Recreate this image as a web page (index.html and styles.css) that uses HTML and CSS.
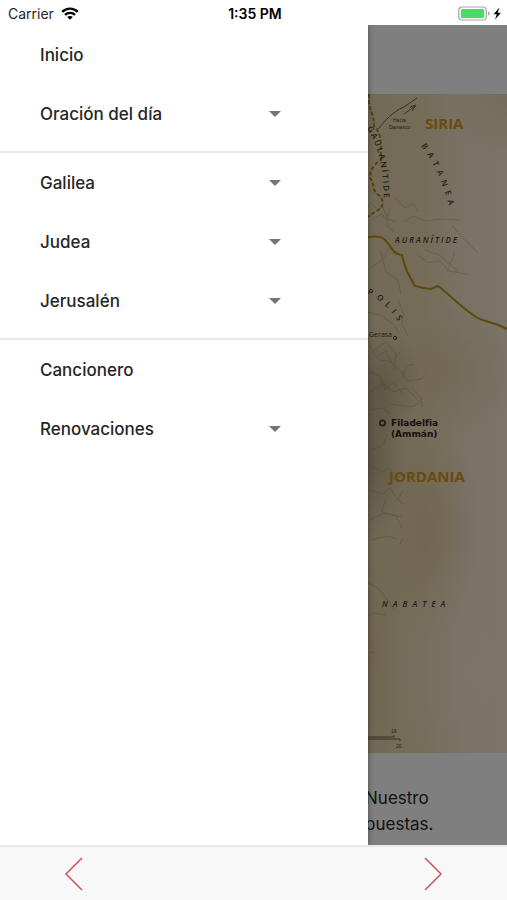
FILE: index.html
```
<!doctype html>
<html lang="es">
    <head>
        <meta charset="UTF-8" />
        <meta name="viewport" content="width=device-width, initial-scale=1.0" />
        <title>Inicio</title>
        <link rel="stylesheet" href="styles.css">
    </head>
    <body>
        <header class="status">
            <div class="carrier">
                Carrier
                <svg width="18" height="13" viewBox="0 0 18 13">
                    <g fill="none" stroke="#000" stroke-width="2.4">
                        <path d="M1.2 4.9C5.6 .5 12.4 .5 16.8 4.9" />
                        <path d="M4 7.9C6.8 5.2 11.2 5.2 14 7.9" />
                    </g>
                    <path d="M9 12.8L6.2 10C7.8 8.5 10.2 8.5 11.8 10z" />
                </svg>
            </div>
            <div class="time">1:35 PM</div>
            <div class="battery">
                <svg width="44" height="15" viewBox="0 0 44 15">
                    <rect x=".7" y="1" width="27.6" height="13" rx="3.5" fill="#fff" stroke="#a5a5a5" stroke-width="1.2" />
                    <rect x="2.8" y="3" width="23.4" height="9" rx="1.5" fill="#4cd964" />
                    <path d="M30 5.5c2 .6 2 3.400 0 4z" fill="#a5a5a5" />
                    <path d="M41.500 1.500L35.500 8.200h3.300L37 13.500l6-6.800h-3.300z" fill="#000" />
                </svg>
            </div>
        </header>

        <main>
            <div class="page">
                <div class="toolbar"></div>
                <svg class="map" viewBox="0 94 507 659">
                    <defs>
                        <linearGradient id="paper">
                            <stop offset="0" stop-color="#e6d5a9" />
                            <stop offset=".74" stop-color="#e6d6ae" />
                            <stop offset=".84" stop-color="#ebdab2" />
                            <stop offset=".92" stop-color="#f4e6cb" />
                            <stop offset="1" stop-color="#f6e9d0" />
                        </linearGradient>
                        <radialGradient id="stain">
                            <stop offset="0" stop-color="#cdb07a" stop-opacity=".3" />
                            <stop offset="1" stop-color="#cdb07a" stop-opacity="0" />
                        </radialGradient>
                        <radialGradient id="light">
                            <stop offset="0" stop-color="#f6ead2" stop-opacity=".8" />
                            <stop offset="1" stop-color="#f6ead2" stop-opacity="0" />
                        </radialGradient>
                        <radialGradient id="shade">
                            <stop offset="0" stop-color="#8f7d5c" stop-opacity=".45" />
                            <stop offset="1" stop-color="#8f7d5c" stop-opacity="0" />
                        </radialGradient>
                        <path id="gaulanitide" d="M367 128C379 148 384 168 384 210" />
                        <path id="batanea" d="M421 146Q440 170 450 210" />
                        <path id="decapolis" d="M367 294Q383 299 402 326" />
                    </defs>
                    <rect y="94" width="507" height="659" fill="url(#paper)" />
                    <ellipse cx="507" cy="94" rx="60" ry="70" fill="url(#stain)" />
                    <ellipse cx="455" cy="370" rx="65" ry="70" fill="url(#stain)" />
                    <ellipse cx="430" cy="530" rx="50" ry="110" fill="url(#stain)" />
                    <ellipse cx="372" cy="650" rx="30" ry="140" fill="url(#stain)" />
                    <ellipse cx="470" cy="670" rx="80" ry="120" fill="url(#light)" />
                    <ellipse cx="380" cy="385" rx="42" ry="60" fill="url(#shade)" />
                    <ellipse cx="372" cy="460" rx="34" ry="90" fill="url(#shade)" />

                    <!-- relieve -->
                    <g class="relief">
                        <path d="M370 202l8 8 5-3 4 12 10 3M372 220l10-6 8 12M395 198l10 10 8-4 5 8M404 222l9-6 12 5 18-2 16 1M390 208l-4 18 8 5" />
                        <path d="M418 255l10 8 12-2 9 10 18 3M425 250l14 5 10 8 9 8M455 252l-8 20M452 225l8 10 18 18" />
                        <path d="M371 268l12-9 7-12 5 8M380 250l6 22 12 8 3 14M368 312l14 4 12 9 5 8M398 300l6 14-2 10 6 12" />
                        <path d="M370 345l6 12 10-6 7 14 8 6 6 10 14-2 4-5M370 372l10 4 5 14 8-8 10 12M374 350l12-8 10 12-2 16M380 360l14 2 6-10" />
                        <path d="M370 392l14-8 10 8 12-4 14 14-8 5-22-3M402 378l4-12 8-2M370 410l12-2 8 6M412 388l9 10 1 9" />
                        <path d="M370 450l12-4 6-12M372 466l10 6 8-4 4 12 9-6M370 490l12 4 8-6 8 12 6 4M386 498l-4 14 14 4 6 12M398 500l5-10M370 520l14-7 18 4M371 540l16-4 10 3" />
                        <path d="M368 583l10 5 8 10 8 12M368 616l6-3 12 2M370 652l5 1M400 544l3-6" />
                    </g>

                    <path class="track" d="M378 129C386 120 392 112 404 107L417 98M404 114l11-8m-5 1l6-2-4 6" />
                    <path class="border" d="M369 94C368 112 374 112 374 126C384 136 380 150 381 160C374 164 370 170 370 178C376 184 370 190 380 196C388 208 376 210 368 217" />
                    <path class="road" d="M368 237C376 236 382 236 385 240C391 246 393 253 398 254L402 255C405 272 410 275 414 285C418 288 425 288 431 289L438 286C450 295 462 308 476 317C486 323 492 321 507 329" />

                    <g class="labels">
                        <text class="country" x="425" y="129">SIRIA</text>
                        <text class="country" x="389" y="482">JORDANIA</text>
                        <text class="tiny" x="393" y="122">Hacia</text>
                        <text class="tiny" x="389" y="129">Damasco</text>
                        <text class="region spaced"><textPath href="#gaulanitide">GAULANÍTIDE</textPath></text>
                        <text class="region wide"><textPath href="#batanea">BATANEA</textPath></text>
                        <text class="region spaced italic" x="395" y="243">AURANÍTIDE</text>
                        <text class="region wide"><textPath href="#decapolis">POLIS</textPath></text>
                        <text class="region wide italic" x="382" y="607">NABATEA</text>
                        <text class="town" x="369" y="337">Gerasa</text>
                        <text class="city" x="391" y="426">Filadelfia</text>
                        <text class="city" x="391" y="437">(Ammán)</text>
                        <text class="tiny" x="391" y="733">16</text>
                        <text class="tiny" x="396" y="748">20</text>
                    </g>
                    <circle class="dot" cx="395" cy="338" r="1.6" stroke-width="1" />
                    <circle class="dot" cx="382.500" cy="423" r="2.6" stroke-width="1.8" />
                    <path class="scale" d="M340 737h54v-2M340 739h60v2" />
                </svg>
                <p class="text">Nuestro<br />puestas.</p>
            </div>
            <div class="backdrop"></div>

            <nav class="menu">
                <div class="group">
                    <a href="#" class="item">Inicio</a>
                    <button type="button" class="item">Oración del día</button>
                </div>
                <div class="group">
                    <button type="button" class="item">Galilea</button>
                    <button type="button" class="item">Judea</button>
                    <button type="button" class="item">Jerusalén</button>
                </div>
                <div class="group">
                    <a href="#" class="item">Cancionero</a>
                    <button type="button" class="item">Renovaciones</button>
                </div>
            </nav>
        </main>

        <footer class="pager">
            <button type="button" aria-label="Anterior">
                <svg width="20" height="36" viewBox="0 0 20 36">
                    <path d="M18 2L2 18l16 16" />
                </svg>
            </button>
            <button type="button" aria-label="Siguiente">
                <svg width="20" height="36" viewBox="0 0 20 36">
                    <path d="M2 2l16 16L2 34" />
                </svg>
            </button>
        </footer>
    </body>
</html>
```
FILE: styles.css
```
* {
    box-sizing: border-box;
}
body {
    display: flex;
    flex-direction: column;
    min-height: 100vh;
    margin: 0;
    background-color: #fff;
    color: #262626;
    font-family: Inter, "Liberation Sans", sans-serif;
}
button {
    padding: 0;
    border: none;
    background: none;
    font-family: inherit;
    cursor: pointer;
}
svg {
    display: block;
}

/* status bar */
.status {
    display: grid;
    grid-template-columns: 1fr auto 1fr;
    align-items: center;
    height: 25px;
    padding: 2px 5px 0 8px;
    font-size: 14px;
}
.carrier {
    display: flex;
    align-items: center;
    gap: 7px;
}
.time {
    color: #000;
    font-weight: 600;
}
.battery {
    justify-self: end;
}

/* page */
main {
    position: relative;
    flex: 1;
    overflow: hidden;
}
.toolbar {
    height: 69px;
}
.map {
    width: 100%;
}
.text {
    margin: 0 0 0 72%;
    padding: 32px 0 8px;
    font-size: 17px;
    line-height: 26px;
}
.backdrop {
    position: absolute;
    inset: 0;
    background-color: rgba(0, 0, 0, 0.5);
}

/* map */
.relief {
    fill: none;
    stroke: #806a45;
    stroke-width: 1;
    stroke-linejoin: round;
    opacity: 0.25;
}
.track,
.scale {
    fill: none;
    stroke: #6d624c;
    stroke-width: 1;
}
.border {
    fill: none;
    stroke: #ad8617;
    stroke-width: 2;
    stroke-dasharray: 4 2;
}
.road {
    fill: none;
    stroke: #bd9018;
    stroke-width: 2;
}
.labels {
    fill: #4a3d31;
    font-family: "Open Sans", "Liberation Sans", sans-serif;
}
.country {
    fill: #d0981c;
    font-size: 15px;
    font-weight: 700;
}
.region {
    font-size: 8px;
    font-weight: 600;
    letter-spacing: 1px;
}
.spaced {
    letter-spacing: 2px;
}
.wide {
    letter-spacing: 5px;
}
.italic {
    font-style: italic;
}
.tiny {
    font-family: "Liberation Sans", sans-serif;
    font-size: 5px;
}
.town {
    font-size: 7px;
}
.city {
    fill: #32201a;
    font-family: "DejaVu Sans", sans-serif;
    font-size: 9px;
    font-weight: 700;
}
.dot {
    fill: none;
    stroke: #4a3d31;
}

/* side menu */
.menu {
    position: absolute;
    top: 0;
    bottom: 0;
    left: 0;
    width: 368px;
    background-color: #fff;
    box-shadow: 0 0 6px rgba(0, 0, 0, 0.4);
}
.group {
    padding-bottom: 8px;
}
.group + .group {
    border-top: 2px solid #e9e9e9;
}
.item {
    display: flex;
    align-items: center;
    justify-content: space-between;
    width: 100%;
    height: 59px;
    padding: 0 87px 0 40px;
    color: #262626;
    font-size: 17px;
    font-weight: 500;
    text-decoration: none;
}
button.item::after {
    content: "";
    border: 6px solid transparent;
    border-top-color: #757575;
    border-bottom: none;
}

/* bottom bar */
.pager {
    position: relative;
    display: flex;
    align-items: center;
    justify-content: space-between;
    height: 55px;
    padding: 0 64px;
    border-top: 2px solid #e9e9e9;
    background-color: #f8f8f8;
}
.pager path {
    fill: none;
    stroke: #c9555a;
    stroke-width: 1.5;
}
```
